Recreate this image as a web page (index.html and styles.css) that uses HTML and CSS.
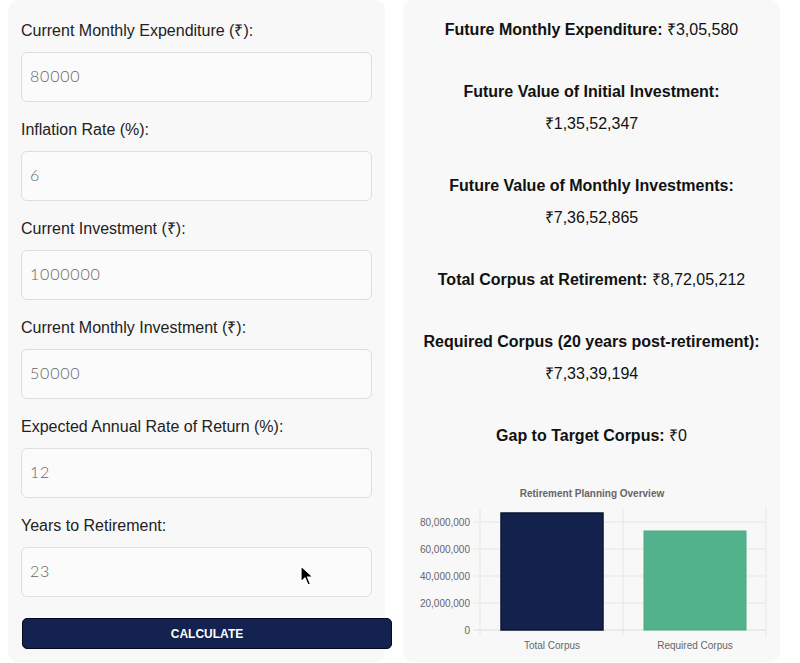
FILE: index.html
```html
<!DOCTYPE html>
<html lang="en">
<head>
<meta charset="utf-8">
<title>Retirement Planner</title>
<link rel="stylesheet" href="styles.css">
</head>
<body>

<div class="planner">
	<!-- inputs -->
	<form class="panel inputs">
		<div class="field">
			<label for="exp">Current Monthly Expenditure (₹):</label>
			<input id="exp" type="text" value="80000">
		</div>
		<div class="field">
			<label for="inf">Inflation Rate (%):</label>
			<input id="inf" type="text" value="6">
		</div>
		<div class="field">
			<label for="inv">Current Investment (₹):</label>
			<input id="inv" type="text" value="1000000">
		</div>
		<div class="field">
			<label for="sip">Current Monthly Investment (₹):</label>
			<input id="sip" type="text" value="50000">
		</div>
		<div class="field">
			<label for="ret">Expected Annual Rate of Return (%):</label>
			<input id="ret" type="text" value="12">
		</div>
		<div class="field">
			<label for="yrs">Years to Retirement:</label>
			<input id="yrs" type="text" value="23">
		</div>
		<button type="button" class="calc">CALCULATE</button>

		<svg class="pointer" width="14" height="22" viewBox="0 0 14 22">
			<path d="M1 1 L1 17 L5 13 L8 20 L10.5 19 L7.5 12 L13 12 Z" fill="#000" stroke="#fff" stroke-width="1.2" stroke-linejoin="round"/>
		</svg>
	</form>

	<!-- results -->
	<div class="panel results">
		<p><b>Future Monthly Expenditure:</b> ₹3,05,580</p>
		<p><b>Future Value of Initial Investment:</b><br>₹1,35,52,347</p>
		<p><b>Future Value of Monthly Investments:</b><br>₹7,36,52,865</p>
		<p><b>Total Corpus at Retirement:</b> ₹8,72,05,212</p>
		<p><b>Required Corpus (20 years post-retirement):</b><br>₹7,33,39,194</p>
		<p><b>Gap to Target Corpus:</b> ₹0</p>

		<svg class="chart" width="352" height="190" viewBox="0 0 352 190">
			<text class="title" x="176" y="31">Retirement Planning Overview</text>

			<g class="grid">
				<line x1="58" y1="56" x2="350" y2="56"/>
				<line x1="58" y1="83" x2="350" y2="83"/>
				<line x1="58" y1="110" x2="350" y2="110"/>
				<line x1="58" y1="137" x2="350" y2="137"/>
				<line x1="64" y1="42" x2="64" y2="170"/>
				<line x1="207" y1="42" x2="207" y2="170"/>
				<line x1="350" y1="42" x2="350" y2="170"/>
			</g>
			<line class="axis" x1="58" y1="164" x2="350" y2="164"/>

			<rect x="85" y="47" width="102" height="117" fill="#13214d" stroke="#0b1433" stroke-width="1.5"/>
			<rect x="228" y="65" width="102" height="99" fill="#52b28b" stroke="#4aa97f" stroke-width="1"/>

			<g class="ylab">
				<text x="54" y="60">80,000,000</text>
				<text x="54" y="87">60,000,000</text>
				<text x="54" y="114">40,000,000</text>
				<text x="54" y="141">20,000,000</text>
				<text x="54" y="168">0</text>
			</g>
			<g class="xlab">
				<text x="136" y="183">Total Corpus</text>
				<text x="279" y="183">Required Corpus</text>
			</g>
		</svg>
	</div>
</div>

</body>
</html>
```

FILE: styles.css
```css
body {
	margin: 0 8px;
	background: #fff;
	font-family: "Liberation Sans", Arial, sans-serif;
	color: #222;
}
.planner {
	display: grid;
	grid-template-columns: 377px 377px;
	column-gap: 18px;
}
.panel {
	background: #f8f8f8;
	border-radius: 10px;
	height: 662px;
	box-sizing: border-box;
}

/* left column */
.inputs {
	position: relative;
	margin: 0;
	padding: 21px 13px 14px 13px;
}
.field {
	margin-bottom: 18px;
}
.field label {
	display: block;
	font-size: 16px;
	line-height: 19px;
	margin-bottom: 12px;
	color: #222;
}
.field input {
	display: block;
	width: 100%;
	height: 50px;
	box-sizing: border-box;
	padding: 0 8px 3px 8px;
	border: 1px solid #dedede;
	border-radius: 6px;
	background: #fbfbfb;
	font-family: Lato, "Open Sans", sans-serif;
	font-weight: 300;
	font-size: 16px;
	letter-spacing: 0.8px;
	color: #666;
	outline: none;
}
.calc {
	display: block;
	margin: 21px 0 0 1px;
	width: 370px;
	height: 31px;
	background: #13224e;
	border: 1px solid #050a1c;
	border-radius: 5px;
	color: #fff;
	font-family: "Liberation Sans", Arial, sans-serif;
	font-weight: bold;
	font-size: 12px;
	cursor: pointer;
}
.pointer {
	position: absolute;
	left: 292px;
	top: 565px;
}

/* right column */
.results {
	padding: 14px 13px 6px 13px;
	text-align: center;
	color: #111;
}
.results p {
	margin: 0;
	font-size: 16px;
	line-height: 32px;
}
.results p + p {
	margin-top: 30px;
}
.chart {
	display: block;
	margin-top: 14px;
	font-family: "Liberation Sans", Arial, sans-serif;
}
.chart .title {
	font-size: 10px;
	font-weight: bold;
	fill: #666;
	text-anchor: middle;
}
.chart .grid line {
	stroke: #e6e6e6;
	stroke-width: 1;
}
.chart .axis {
	stroke: #dcdcdc;
	stroke-width: 1;
}
.chart .ylab text {
	font-size: 10px;
	fill: #666;
	text-anchor: end;
}
.chart .xlab text {
	font-size: 10px;
	fill: #666;
	text-anchor: middle;
}
```
